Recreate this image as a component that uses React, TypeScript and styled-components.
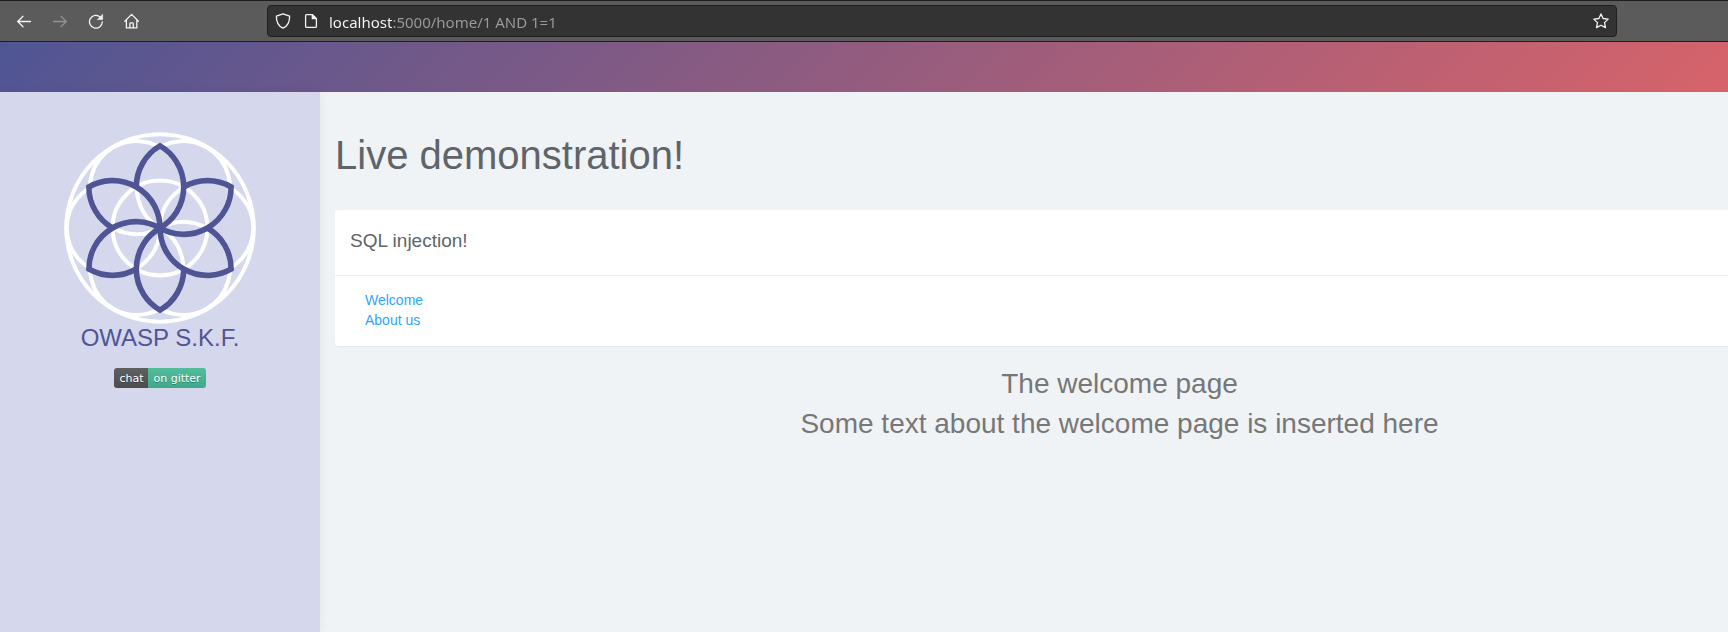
import React from "react";
import styled, { createGlobalStyle } from "styled-components";

const GlobalStyle = createGlobalStyle`
  *, *::before, *::after { box-sizing: border-box; }
  html, body, #root { height: 100%; }
  body {
    margin: 0;
    background: #f0f3f6;
    color: #5f6468;
    font: 14px/20px "Liberation Sans", Arial, sans-serif;
  }
`;

const Page = styled.div`
  display: flex;
  flex-direction: column;
  min-height: 100%;
`;

const Toolbar = styled.header`
  display: flex;
  align-items: center;
  height: 42px;
  padding: 0 12px;
  background: #5b5b5b;
  border-top: 1px solid #1f1f1f;
  border-bottom: 1px solid #1f1f1f;
`;

const NavButtons = styled.nav`
  display: flex;
  gap: 12px;
  flex: 0 0 255px;
`;

const IconButton = styled.button`
  display: flex;
  align-items: center;
  justify-content: center;
  flex: none;
  width: 24px;
  height: 24px;
  padding: 0;
  border: 0;
  background: none;
  color: #f4f4f4;

  &:disabled { color: #929292; }
`;

const AddressBar = styled.form`
  display: flex;
  align-items: center;
  gap: 4px;
  flex: 0 1 1350px;
  height: 32px;
  padding: 0 3px;
  background: #333;
  border: 1px solid #1f1f1f;
  border-radius: 4px;
`;

/* The host part of the address is bright, the rest is dimmed. */
const AddressInput = styled.input`
  flex: 1;
  min-width: 0;
  height: 30px;
  padding: 2px 0 0 2px;
  border: 0;
  outline: 0;
  font: 15px/28px "Noto Sans", sans-serif;
  color: transparent;
  background: linear-gradient(90deg, #fbfbfe 66px, #9c9c9c 66px);
  background-clip: text;
  -webkit-background-clip: text;
`;

const Banner = styled.div`
  height: 50px;
  background: linear-gradient(135deg, #4f5594 0%, #d7636a 100%);
`;

const Body = styled.div`
  display: flex;
  flex: 1;
`;

const Sidebar = styled.aside`
  display: flex;
  flex-direction: column;
  align-items: center;
  flex: 0 0 320px;
  padding-top: 40px;
  background: #d5d7ed;
  box-shadow: 1px 0 10px rgba(0, 0, 0, 0.05);
`;

const Brand = styled.h2`
  margin: 0 0 16px;
  font-size: 24px;
  line-height: 28px;
  font-weight: 400;
  color: #4f5594;
`;

const Badge = styled.a`
  display: flex;
  height: 20px;
  border-radius: 3px;
  overflow: hidden;
  font: 11px/21px "DejaVu Sans", Verdana, sans-serif;
  color: #fff;
  text-decoration: none;
  text-shadow: 0 1px 0 rgba(1, 1, 1, 0.3);
`;

const BadgePart = styled.span<{ $color: string }>`
  padding: 0 5px;
  background: linear-gradient(rgba(187, 187, 187, 0.1), rgba(0, 0, 0, 0.1)) ${(p) => p.$color};
`;

const Main = styled.main`
  flex: 1;
  min-width: 0;
  padding: 41px 0 0 15px;
`;

const Title = styled.h1`
  margin: 0 0 33px;
  font-size: 40px;
  line-height: 44px;
  font-weight: 400;
`;

const Panel = styled.section`
  margin-bottom: 18px;
  background: #fff;
  border-radius: 4px 0 0 4px;
  box-shadow: 0 1px 1px rgba(0, 0, 0, 0.05);
`;

const PanelTitle = styled.h3`
  margin: 0;
  padding: 21px 15px 24px;
  border-bottom: 1px solid #eceeef;
  font-size: 19px;
  line-height: 20px;
  font-weight: 400;
`;

const LinkList = styled.ul`
  margin: 0;
  padding: 14px 30px 16px;
  list-style: none;
`;

const PageLink = styled.a`
  color: #30a5ff;
  text-decoration: none;
`;

const Messages = styled.section`
  padding-left: 176px;
  font-size: 28px;
  line-height: 40px;
  text-align: center;
  color: #777;
`;

const Message = styled.p`
  margin: 0;
`;

const Icon = ({ children }: { children: React.ReactNode }) => (
  <svg width="16" height="16" viewBox="0 0 16 16" fill="none" stroke="currentColor"
    strokeWidth="1.3" strokeLinecap="round" strokeLinejoin="round" aria-hidden="true">
    {children}
  </svg>
);

const R = 47.4;
const H = R * Math.sqrt(3);

const Logo = () => (
  <svg width="192" height="192" viewBox="-96 -96 192 192" fill="none" role="img" aria-label="OWASP S.K.F.">
    <g stroke="#fff" strokeWidth="4">
      <circle r="93.8" />
      <circle r={R} />
      {[0, 60, 120, 180, 240, 300].map((a) => (
        <circle key={a} cx={R - 0.8} r={R - 0.8} transform={`rotate(${a})`} />
      ))}
    </g>
    <g stroke="#4f5594" strokeWidth="5.6">
      {[0, 60, 120, 180, 240, 300].map((a) => (
        <path key={a} transform={`rotate(${a})`}
          d={`M${-R / 2} ${-H / 2}A${R} ${R} 0 0 1 0 ${-H}A${R} ${R} 0 0 1 0 0`} />
      ))}
    </g>
  </svg>
);

export default function App() {
  return (
    <Page>
      <GlobalStyle />
      <Toolbar>
        <NavButtons aria-label="Browser">
          <IconButton aria-label="Back"><Icon><path d="M14.5 8.5H1.7M7 3.2 1.7 8.5 7 13.8" /></Icon></IconButton>
          <IconButton aria-label="Forward" disabled><Icon><path d="M1.5 8.5h12.8M9 3.2 14.3 8.5 9 13.8" /></Icon></IconButton>
          <IconButton aria-label="Reload">
            <Icon>
              <path d="M14.3 9A6.4 6.4 0 1 1 12.2 4" />
              <path d="M14.6 1.6v5h-5z" fill="currentColor" strokeWidth=".6" />
            </Icon>
          </IconButton>
          <IconButton aria-label="Home">
            <Icon><path d="M.8 8.2 7.6 1.4 14.4 8.2M2.4 6.8v8.1h10.4V6.8M5.9 14.7v-4q0-.8.8-.8h1.8q.8 0 .8.8v4" /></Icon>
          </IconButton>
        </NavButtons>
        <AddressBar onSubmit={(e) => e.preventDefault()}>
          <IconButton type="button" aria-label="Tracking protection">
            <Icon><path d="M8 .9 14.6 3.2C14.8 8.5 13 12.8 8 15.2 3 12.8 1.2 8.5 1.4 3.2z" /></Icon>
          </IconButton>
          <IconButton type="button" aria-label="Site information">
            <Icon>
              <path d="M9.3 1.6H3.6q-1 0-1 1v10.8q0 1 1 1h8.8q1 0 1-1V5.7z" />
              <path d="M9.3 1.6v4.1h4.1z" fill="currentColor" />
            </Icon>
          </IconButton>
          <AddressInput aria-label="Address" spellCheck={false} defaultValue="localhost:5000/home/1 AND 1=1" />
          <IconButton type="button" aria-label="Bookmark this page">
            <Icon><path d="m8 .9 2.1 4.6 5.1.6-3.7 3.5 1 5L8 12.2l-4.5 2.4 1-5L.8 6.1l5.1-.6z" /></Icon>
          </IconButton>
        </AddressBar>
      </Toolbar>
      <Banner />
      <Body>
        <Sidebar>
          <Logo />
          <Brand>OWASP S.K.F.</Brand>
          <Badge href="#chat">
            <BadgePart $color="#555">chat</BadgePart>
            <BadgePart $color="#46bc99">on gitter</BadgePart>
          </Badge>
        </Sidebar>
        <Main>
          <Title>Live demonstration!</Title>
          <Panel>
            <PanelTitle>SQL injection!</PanelTitle>
            <LinkList>
              <li><PageLink href="#welcome">Welcome</PageLink></li>
              <li><PageLink href="#about">About us</PageLink></li>
            </LinkList>
          </Panel>
          <Messages>
            <Message>The welcome page</Message>
            <Message>Some text about the welcome page is inserted here</Message>
          </Messages>
        </Main>
      </Body>
    </Page>
  );
}
